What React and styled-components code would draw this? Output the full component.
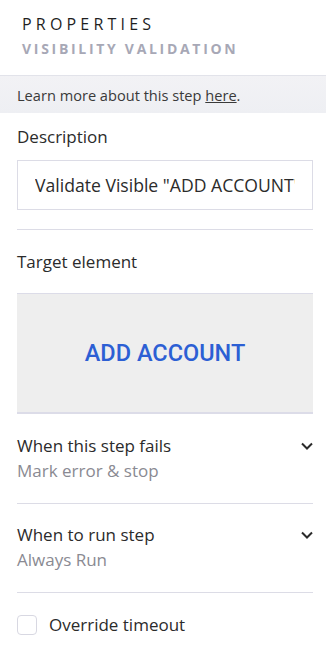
import React, { useState } from "react"
import styled, { createGlobalStyle } from "styled-components"

const GlobalStyle = createGlobalStyle`
  html, body {
    margin: 0;
    padding: 0;
    background: #ffffff;
  }
  body {
    font-family: "Open Sans", Lato, sans-serif;
    color: #2b2b2b;
  }
  * {
    box-sizing: border-box;
  }
`

const Panel = styled.div`
  width: 326px;
  height: 666px;
  background: #ffffff;
  overflow: hidden;
`

const Header = styled.div`
  padding: 13px 22px 0;
  height: 75px;
`

const Title = styled.div`
  font-size: 16px;
  line-height: 22px;
  letter-spacing: 4.2px;
  color: #1f1f1f;
`

const Subtitle = styled.div`
  margin-top: 5px;
  font-size: 14px;
  font-weight: 700;
  line-height: 18px;
  letter-spacing: 2.7px;
  color: #a7a8b6;
`

const InfoBar = styled.div`
  height: 38px;
  padding: 0 17px;
  display: flex;
  align-items: center;
  border-top: 1px solid #e2e3ea;
  background: linear-gradient(#f2f2f5, #eeeff3);
  font-size: 14.6px;
  color: #3a3a3a;

  a {
    color: #3a3a3a;
    text-decoration: underline;
  }
`

const Body = styled.div`
  padding: 0 13px 0 17px;
`

const Section = styled.div`
  padding: ${(p) => p.$pad || "16px 0 20px"};
  border-bottom: ${(p) => (p.$line ? "1px solid #dcdce6" : "none")};
`

const Label = styled.div`
  font-size: 17px;
  line-height: 24px;
  color: #2b2b2b;
`

const TextInput = styled.input`
  display: block;
  width: 100%;
  height: 50px;
  margin-top: 11px;
  padding: 0 17px;
  border: 1px solid #dcdce6;
  border-radius: 0;
  outline: none;
  font-family: "Open Sans", Lato, sans-serif;
  font-size: 17.6px;
  color: #2b2b2b;
  background: #ffffff;
`

const Preview = styled.div`
  margin-top: 19px;
  height: 121px;
  display: flex;
  align-items: center;
  justify-content: center;
  background: #eeeeee;
  border-top: 1px solid #dcdce8;
  border-bottom: 2px solid #dcdce8;
`

const PreviewText = styled.span`
  font-family: Roboto, sans-serif;
  font-weight: 500;
  font-size: 23.5px;
  color: #2c5fd4;
`

const DropRow = styled.div`
  display: flex;
  align-items: flex-start;
  justify-content: space-between;
  cursor: pointer;
`

const Value = styled.div`
  font-size: 17px;
  line-height: 24px;
  margin-top: 1px;
  color: #8a8a92;
`

const Chevron = styled.svg`
  width: 14px;
  height: 14px;
  margin-top: 5px;
  margin-right: -1px;
`

const CheckRow = styled.label`
  display: flex;
  align-items: center;
  gap: 12px;
  font-size: 17px;
  color: #2b2b2b;
  cursor: pointer;
`

const Box = styled.span`
  width: 20px;
  height: 20px;
  border: 1px solid #d8d8e2;
  border-radius: 4px;
  background: ${(p) => (p.$on ? "#2c5fd4" : "#ffffff")};
`

function Dropdown({ label, value }) {
  return (
    <DropRow>
      <div>
        <Label>{label}</Label>
        <Value>{value}</Value>
      </div>
      <Chevron viewBox="0 0 14 14" fill="none">
        <path d="M2 4.5 L7 9.5 L12 4.5" stroke="#2b2b2b" strokeWidth="2" />
      </Chevron>
    </DropRow>
  )
}

export default function App() {
  const [override, setOverride] = useState(false)

  return (
    <Panel>
      <GlobalStyle />
      <Header>
        <Title>PROPERTIES</Title>
        <Subtitle>VISIBILITY VALIDATION</Subtitle>
      </Header>
      <InfoBar>
        <span>
          Learn more about this step <a href="#">here</a>.
        </span>
      </InfoBar>
      <Body>
        <Section $pad="12px 0 19px" $line>
          <Label>Description</Label>
          <TextInput readOnly value={'Validate Visible "ADD ACCOUNT"'} />
        </Section>
        <Section $pad="20px 0 0">
          <Label>Target element</Label>
          <Preview>
            <PreviewText>ADD ACCOUNT</PreviewText>
          </Preview>
        </Section>
        <Section $pad="20px 0 20px" $line>
          <Dropdown label="When this step fails" value="Mark error & stop" />
        </Section>
        <Section $pad="19px 0 20px" $line>
          <Dropdown label="When to run step" value="Always Run" />
        </Section>
        <Section $pad="20px 0">
          <CheckRow onClick={() => setOverride(!override)}>
            <Box $on={override} />
            Override timeout
          </CheckRow>
        </Section>
      </Body>
    </Panel>
  )
}
